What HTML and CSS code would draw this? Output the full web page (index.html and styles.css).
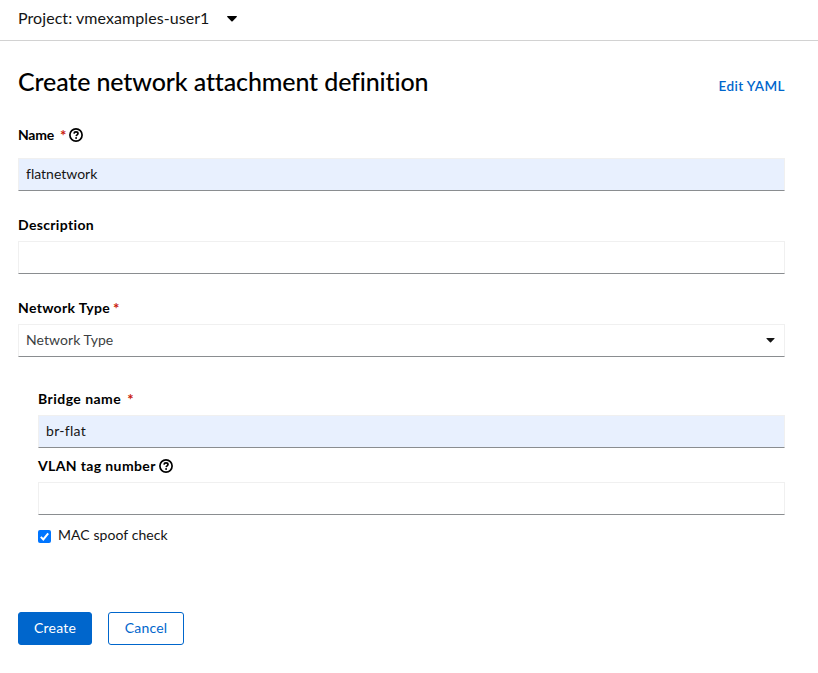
FILE: index.html
```html
<!DOCTYPE html>
<html lang="en">
<head>
<meta charset="utf-8">
<title>Create network attachment definition</title>
<link rel="stylesheet" href="styles.css">
</head>
<body>
<header class="project-bar">
  <span class="project-name">Project: vmexamples-user1</span>
  <svg class="caret" viewBox="0 0 10 6"><path d="M.6 0h8.8q.9.1.3.9L5.6 5.2q-.6.6-1.2 0L.3.9Q-.3.1.6 0z"/></svg>
</header>
<main class="page">
  <div class="heading">
    <h1>Create network attachment definition</h1>
    <a class="yaml-link">Edit YAML</a>
  </div>
  <form>
    <div class="field field-name">
      <div class="label"><span class="text-name">Name</span><span class="required wide">*</span>
        <svg class="help" viewBox="0 0 14 14"><circle cx="7" cy="7" r="6.1"/><path d="M5 5.6C5.1 4.4 6 3.9 7 3.9c1.1 0 2 .6 2 1.6 0 1.3-1.7 1.3-1.8 2.6"/><circle class="dot" cx="7.1" cy="10" r=".95"/></svg>
      </div>
      <input class="control filled" type="text" value="flatnetwork">
    </div>
    <div class="field field-description">
      <div class="label"><span class="text-description">Description</span></div>
      <input class="control" type="text">
    </div>
    <div class="field field-type">
      <div class="label"><span class="text-type">Network Type</span><span class="required">*</span></div>
      <div class="control select"><span>Network Type</span>
        <svg class="caret small" viewBox="0 0 10 6"><path d="M.6 0h8.8q.9.1.3.9L5.6 5.2q-.6.6-1.2 0L.3.9Q-.3.1.6 0z"/></svg>
      </div>
    </div>
    <div class="nested">
      <div class="field field-bridge">
        <div class="label"><span class="text-bridge">Bridge name</span><span class="required wide">*</span></div>
        <input class="control filled bridge" type="text" value="br-flat">
      </div>
      <div class="field field-vlan">
        <div class="label"><span class="text-vlan">VLAN tag number</span>
          <svg class="help" viewBox="0 0 14 14"><circle cx="7" cy="7" r="6.1"/><path d="M5 5.6C5.1 4.4 6 3.9 7 3.9c1.1 0 2 .6 2 1.6 0 1.3-1.7 1.3-1.8 2.6"/><circle class="dot" cx="7.1" cy="10" r=".95"/></svg>
        </div>
        <input class="control" type="text">
      </div>
      <label class="check">
        <svg class="checkbox" viewBox="0 0 13 13"><rect width="13" height="13" rx="2"/><path d="M2.8 6.9l2.5 2.5 4.9-6"/></svg>
        <span>MAC spoof check</span>
      </label>
    </div>
    <div class="actions">
      <button class="button primary" type="button">Create</button>
      <button class="button secondary" type="button">Cancel</button>
    </div>
  </form>
</main>
</body>
</html>
```
FILE: styles.css
```css
* { box-sizing: border-box; }
body {
  margin: 0;
  background: #fff;
  color: #151515;
  font: 14px/20px Lato, "Liberation Sans", sans-serif;
  font-variant-ligatures: none;
}
svg { display: block; flex: none; }
.project-bar {
  display: flex;
  align-items: center;
  height: 41px;
  padding: 0 18px 4px;
  border-bottom: 1px solid #d2d2d2;
  font-size: 16px;
}
.project-name { width: 209px; letter-spacing: .07px; }
.caret { width: 10px; height: 6px; margin-top: 1px; fill: #000; }
.caret.small { width: 9px; height: 5px; margin-top: 2px; fill: #151515; }
.page { padding: 0 33px 0 18px; }
.heading {
  display: flex;
  justify-content: space-between;
  align-items: center;
  height: 83px;
}
h1 {
  margin: 0;
  padding-bottom: 3px;
  color: #000;
  font-size: 25px;
  font-weight: 500;
  line-height: 32px;
  letter-spacing: -.13px;
}
.yaml-link {
  padding-top: 6px;
  color: #06c;
  font-size: 13.5px;
  font-weight: 600;
  letter-spacing: .42px;
}
.label {
  display: flex;
  align-items: center;
  height: 22px;
  color: #000;
  font-weight: 700;
}
.text-name { letter-spacing: -.25px; }
.text-description { letter-spacing: .34px; }
.text-type { letter-spacing: .33px; }
.text-bridge { letter-spacing: .46px; }
.text-vlan { letter-spacing: .37px; margin-right: 3px; }
.required { margin-left: 3px; color: #c9190b; font-size: 15px; }
.required.wide { margin: 0 3px 0 6px; }
.help { width: 14px; height: 14px; fill: none; stroke: #000; stroke-width: 1.7; }
.help .dot { fill: #000; stroke: none; }
.control {
  display: block;
  width: 100%;
  height: 33px;
  margin: 0;
  padding: 0 7px 2px;
  border: 1px solid #f0f0f0;
  border-bottom-color: #8a8d90;
  border-radius: 0;
  outline: none;
  background: #fff;
  color: #151515;
  font: inherit;
}
.filled { background: #e8f0fe; }
.bridge { letter-spacing: .3px; }
.select {
  display: flex;
  align-items: center;
  justify-content: space-between;
  padding-right: 9.5px;
  color: #3c3f42;
  letter-spacing: .06px;
}
.field-name .label { height: 34px; padding-bottom: 12px; }
.field-description { padding-top: 23px; }
.field-description .label { height: 27px; padding-bottom: 6px; }
.field-type { padding-top: 24px; }
.field-type .label { height: 26px; padding-bottom: 7px; }
.nested { padding: 32px 0 0 20px; }
.field-bridge .label { height: 26px; padding-bottom: 7px; }
.field-vlan { padding-top: 8px; }
.field-vlan .label { height: 26px; padding-bottom: 6px; }
.check {
  display: flex;
  align-items: center;
  gap: 7px;
  height: 20px;
  margin-top: 10px;
  letter-spacing: .07px;
}
.checkbox { width: 13px; height: 13px; margin-top: 3px; fill: #0075ff; }
.checkbox path { fill: none; stroke: #fff; stroke-width: 2; }
.actions { display: flex; gap: 16px; margin-top: 67px; }
.button {
  height: 33px;
  padding: 0 0 2px;
  border: 1px solid #06c;
  border-radius: 3px;
  font: inherit;
  letter-spacing: .2px;
}
.primary { width: 74px; background: #06c; color: #fff; }
.secondary { width: 76px; background: #fff; color: #06c; }
```
